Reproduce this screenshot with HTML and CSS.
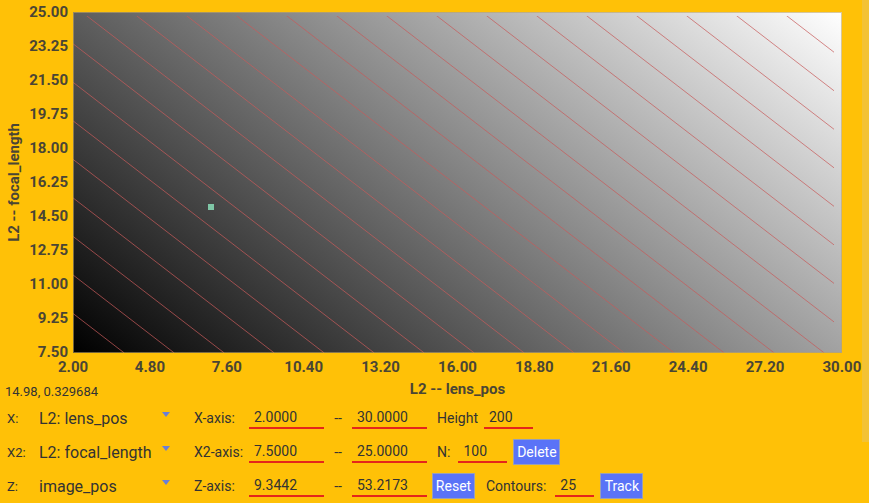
FILE: index.html
```html
<!DOCTYPE html>
<html>
<head>
<meta charset="utf-8">
<title>Contour plot</title>
<link rel="stylesheet" href="styles.css">
</head>
<body>
<div class="page">
  <div class="chart">
    <div class="ytitle"><span>L2 -- focal_length</span></div>
    <div class="yticks">
      <span class="ytick">25.00</span>
      <span class="ytick">23.25</span>
      <span class="ytick">21.50</span>
      <span class="ytick">19.75</span>
      <span class="ytick">18.00</span>
      <span class="ytick">16.25</span>
      <span class="ytick">14.50</span>
      <span class="ytick">12.75</span>
      <span class="ytick">11.00</span>
      <span class="ytick">9.25</span>
      <span class="ytick">7.50</span>
    </div>
    <div class="plot">
      <svg width="769" height="341" viewBox="0 0 769 341">
        <defs>
          <linearGradient id="zgrad" gradientUnits="userSpaceOnUse" x1="0" y1="341" x2="451.1" y2="-244.8">
            <stop offset="0" stop-color="#000"/>
            <stop offset="1" stop-color="#fff"/>
          </linearGradient>
          <clipPath id="clip">
            <rect x="0" y="4" width="761" height="337"/>
          </clipPath>
        </defs>
        <rect x="0" y="0" width="769" height="341" fill="url(#zgrad)"/>
        <g clip-path="url(#clip)" stroke="#c85a5a" stroke-opacity="0.72" stroke-width="1" fill="none">
          <line x1="-391.2" y1="0" x2="51.3" y2="341"/>
          <line x1="-341.2" y1="0" x2="101.3" y2="341"/>
          <line x1="-291.2" y1="0" x2="151.3" y2="341"/>
          <line x1="-241.2" y1="0" x2="201.3" y2="341"/>
          <line x1="-191.2" y1="0" x2="251.3" y2="341"/>
          <line x1="-141.2" y1="0" x2="301.3" y2="341"/>
          <line x1="-91.2" y1="0" x2="351.3" y2="341"/>
          <line x1="-41.2" y1="0" x2="401.3" y2="341"/>
          <line x1="8.8" y1="0" x2="451.3" y2="341"/>
          <line x1="58.8" y1="0" x2="501.3" y2="341"/>
          <line x1="108.8" y1="0" x2="551.3" y2="341"/>
          <line x1="158.8" y1="0" x2="601.3" y2="341"/>
          <line x1="208.8" y1="0" x2="651.3" y2="341"/>
          <line x1="258.8" y1="0" x2="701.3" y2="341"/>
          <line x1="308.8" y1="0" x2="751.3" y2="341"/>
          <line x1="358.8" y1="0" x2="801.3" y2="341"/>
          <line x1="408.8" y1="0" x2="851.3" y2="341"/>
          <line x1="458.8" y1="0" x2="901.3" y2="341"/>
          <line x1="508.8" y1="0" x2="951.3" y2="341"/>
          <line x1="558.8" y1="0" x2="1001.3" y2="341"/>
          <line x1="608.8" y1="0" x2="1051.3" y2="341"/>
          <line x1="658.8" y1="0" x2="1101.3" y2="341"/>
          <line x1="708.8" y1="0" x2="1151.3" y2="341"/>
        </g>
        <rect x="135" y="192" width="6" height="6" fill="#7fc6a6"/>
        <rect x="0.5" y="0.5" width="768" height="340" fill="none" stroke="#bfa560" stroke-opacity="0.6"/>
      </svg>
    </div>
  </div>
  <div class="xticks">
    <span class="xtick">2.00</span>
    <span class="xtick">4.80</span>
    <span class="xtick">7.60</span>
    <span class="xtick">10.40</span>
    <span class="xtick">13.20</span>
    <span class="xtick">16.00</span>
    <span class="xtick">18.80</span>
    <span class="xtick">21.60</span>
    <span class="xtick">24.40</span>
    <span class="xtick">27.20</span>
    <span class="xtick">30.00</span>
  </div>
  <div class="status-row">
    <span class="coords">14.98, 0.329684</span>
    <span class="xtitle">L2 -- lens_pos</span>
  </div>
  <div class="controls">
    <div class="row">
      <span class="var-lbl">X:</span>
      <div class="select"><span class="select-text">L2: lens_pos</span><span class="caret"></span></div>
      <span class="axis-lbl">X-axis:</span>
      <span class="field f75">2.0000</span>
      <span class="dash">--</span>
      <span class="field f75">30.0000</span>
      <span class="txt ml10">Height</span>
      <span class="field f49 ml6">200</span>
    </div>
    <div class="row">
      <span class="var-lbl">X2:</span>
      <div class="select"><span class="select-text">L2: focal_length</span><span class="caret"></span></div>
      <span class="axis-lbl">X2-axis:</span>
      <span class="field f75">7.5000</span>
      <span class="dash">--</span>
      <span class="field f75">25.0000</span>
      <span class="txt ml10">N:</span>
      <span class="field f49 ml8">100</span>
      <span class="btn b47 ml6">Delete</span>
    </div>
    <div class="row">
      <span class="var-lbl">Z:</span>
      <div class="select"><span class="select-text">image_pos</span><span class="caret"></span></div>
      <span class="axis-lbl">Z-axis:</span>
      <span class="field f75">9.3442</span>
      <span class="dash">--</span>
      <span class="field f75">53.2173</span>
      <span class="btn b43 ml5">Reset</span>
      <span class="txt ml11">Contours:</span>
      <span class="field f39 ml9">25</span>
      <span class="btn b43 ml6">Track</span>
    </div>
  </div>
</div>
<div class="scrollbar"></div>
</body>
</html>
```

FILE: styles.css
```css
html, body {
  margin: 0;
  padding: 0;
}

body {
  width: 869px;
  height: 503px;
  overflow: hidden;
  background: #ffc107;
  font-family: Roboto, "Liberation Sans", sans-serif;
  color: #333;
  position: relative;
}

.page {
  padding-top: 12px;
}

.chart {
  display: flex;
  height: 341px;
}

.ytitle {
  width: 28px;
  display: flex;
  align-items: center;
  justify-content: center;
}

.ytitle span {
  writing-mode: vertical-rl;
  transform: rotate(180deg);
  font-size: 15px;
  font-weight: 700;
  color: #4a4535;
  white-space: nowrap;
}

.yticks {
  width: 40px;
  margin-right: 5px;
  display: flex;
  flex-direction: column;
  justify-content: space-between;
}

.ytick,
.xtick {
  display: flex;
  align-items: center;
  font-size: 15px;
  font-weight: 700;
  color: #4a4535;
  line-height: 1;
  white-space: nowrap;
}

.ytick {
  height: 0;
  justify-content: flex-end;
}

.plot {
  width: 769px;
  height: 341px;
}

.plot svg {
  display: block;
}

.xticks {
  margin-left: 73px;
  width: 769px;
  height: 0;
  margin-top: 14px;
  display: flex;
  justify-content: space-between;
}

.xtick {
  width: 0;
  justify-content: center;
}

.status-row {
  display: grid;
  grid-template-columns: 73px 769px;
  height: 16px;
  margin-top: 13px;
  align-items: center;
}

.coords {
  padding-left: 5px;
  font-size: 13px;
  white-space: nowrap;
  color: #333;
  position: relative;
  top: 2px;
}

.xtitle {
  text-align: center;
  font-size: 15px;
  font-weight: 700;
  color: #4a4535;
}

.controls {
  margin-top: 5px;
}

.row {
  display: flex;
  align-items: center;
  height: 34px;
  padding-left: 7px;
}

.var-lbl {
  width: 32px;
  font-size: 13px;
}

.select {
  width: 155px;
  align-self: stretch;
  display: flex;
  align-items: center;
  justify-content: space-between;
  padding-right: 24px;
  box-sizing: border-box;
}

.select-text {
  font-size: 16px;
}

.caret {
  align-self: flex-start;
  margin-top: 11px;
  width: 0;
  height: 0;
  border-left: 4px solid transparent;
  border-right: 4px solid transparent;
  border-top: 5px solid #6b7fd7;
}

.axis-lbl {
  width: 55px;
  font-size: 14px;
}

.field {
  height: 22px;
  box-sizing: border-box;
  border-bottom: 2px solid #e4261b;
  padding-left: 5px;
  font-size: 14px;
  display: flex;
  align-items: center;
}

.f75 { width: 75px; }
.f49 { width: 49px; }
.f39 { width: 39px; }

.dash {
  width: 28px;
  text-align: center;
  font-size: 14px;
}

.txt {
  font-size: 14px;
}

.btn {
  height: 26px;
  box-sizing: border-box;
  background: #5a73f7;
  border: 1px solid #9aa0b4;
  color: #fff;
  font-size: 14px;
  display: flex;
  align-items: center;
  justify-content: center;
}

.b47 { width: 47px; }
.b43 { width: 43px; }

.ml5 { margin-left: 5px; }
.ml6 { margin-left: 6px; }
.ml8 { margin-left: 8px; }
.ml9 { margin-left: 9px; }
.ml10 { margin-left: 10px; }
.ml11 { margin-left: 11px; }

.scrollbar {
  position: absolute;
  top: 0;
  right: 0;
  width: 7px;
  height: 442px;
  background: #f3c235;
}
```
